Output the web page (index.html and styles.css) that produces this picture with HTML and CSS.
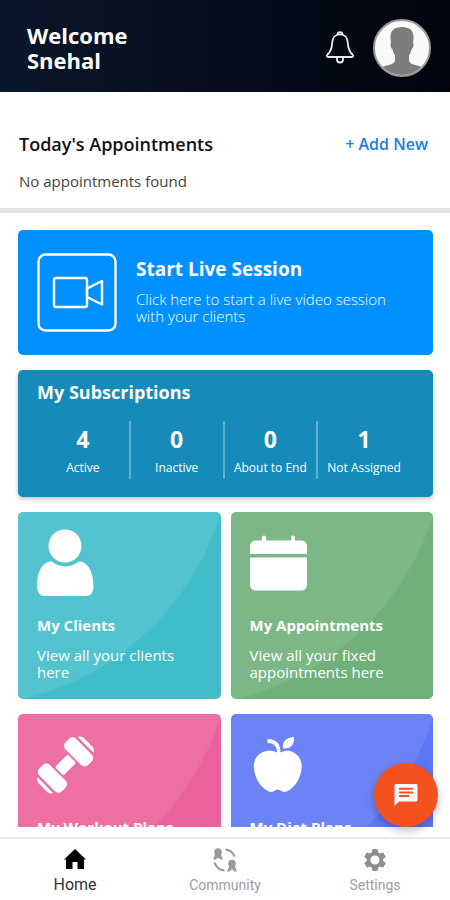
FILE: index.html
```html
<!DOCTYPE html>
<html lang="en">
<head>
  <meta charset="UTF-8">
  <title>Home</title>
  <meta name="viewport" content="width=device-width, initial-scale=1.0">
  <link rel="stylesheet" href="styles.css">
</head>
<body>
  <header class="topbar">
    <h1>Welcome<br>Snehal</h1>
    <button type="button" class="icon-btn" aria-label="Notifications">
      <svg width="28" height="34" viewBox="0 0 28 34" fill="none" stroke="#e8e8ea" stroke-width="1.8" stroke-linejoin="round">
        <path d="M11.500 3.600a2.500 2.500 0 0 1 5 0M14 3.400c-5 0-7.600 3.600-7.800 8.200-.2 6-1.200 9-5 12.400-.6.800-.2 2 .8 2h24c1 0 1.400-1.200.8-2-3.800-3.400-4.800-6.400-5-12.400C21.600 7 19 3.400 14 3.400z"/>
        <path d="M11 26.500v2a3 3 0 0 0 6 0v-2"/>
      </svg>
    </button>
    <button type="button" class="icon-btn" aria-label="Profile">
      <svg width="58" height="58" viewBox="0 0 58 58">
        <defs><clipPath id="face"><circle cx="29" cy="29" r="27"/></clipPath></defs>
        <circle cx="29" cy="29" r="28" fill="#fafafa" stroke="#9a9a9a" stroke-width="2"/>
        <path clip-path="url(#face)" fill="#7d7d7d" d="M29 8c-8 0-12 4-11.500 11 .2 2 .3 4 .5 5-1.200 1-.5 5 1.500 6.500.8 3 1.500 4.500 2.500 6v5.500c-1 3-6 4-10 5C9 48 6.500 49.500 5 51v7h48v-7c-1.500-1.500-4-3-7-4-4-1-9-2-10-5v-5.500c1-1.500 1.700-3 2.500-6 2-1.500 2.700-5.500 1.500-6.500.2-1 .3-3 .5-5C41 12 37 8 29 8z"/>
      </svg>
    </button>
  </header>

  <main class="content">
    <section class="today">
      <div class="today-head">
        <h2>Today's Appointments</h2>
        <a href="#">+ Add New</a>
      </div>
      <p>No appointments found</p>
    </section>

    <div class="cards">
      <a href="#" class="card live">
        <svg width="80" height="80" viewBox="0 0 80 80" fill="none" stroke="#fff" stroke-width="2.4" stroke-linejoin="round">
          <rect x="1.500" y="2.500" width="77" height="76" rx="7"/>
          <rect x="17" y="26" width="33" height="29" rx="2"/>
          <path d="M50 36.500l15-7.500v23.500l-15-7.500z"/>
        </svg>
        <div class="live-text">
          <h3>Start Live Session</h3>
          <p>Click here to start a live video session with your clients</p>
        </div>
      </a>

      <section class="card subs">
        <h3>My Subscriptions</h3>
        <ul class="stats">
          <li><strong>4</strong><span>Active</span></li>
          <li><strong>0</strong><span>Inactive</span></li>
          <li><strong>0</strong><span>About to End</span></li>
          <li><strong>1</strong><span>Not Assigned</span></li>
        </ul>
      </section>

      <div class="tiles">
        <a href="#" class="card tile clients">
          <svg width="58" height="72" viewBox="0 0 58 72" fill="#fff">
            <circle cx="28" cy="18" r="16.500"/>
            <path d="M15 33.500c7.500 6.500 19 6.500 26.500 0C50 33 56.500 43 56.500 58c0 7-3 10-8 10H8c-5 0-8-3-8-10 0-15 6-25 15-24.500z"/>
          </svg>
          <h4>My Clients</h4>
          <p>View all your clients here</p>
        </a>
        <a href="#" class="card tile appointments">
          <svg width="58" height="72" viewBox="0 0 58 72" fill="#fff">
            <path d="M6 12.500h6V9.500a2 2 0 0 1 4 0v3h25V9.500a2 2 0 0 1 4 0v3h6c4 0 6 2.500 6 6.500v7H0v-7c0-4 2-6.500 6-6.500zM0 29.500h57V56c0 4-2 6.500-6 6.500H6c-4 0-6-2.500-6-6.500z"/>
          </svg>
          <h4>My Appointments</h4>
          <p>View all your fixed appointments here</p>
        </a>
        <a href="#" class="card tile workout">
          <svg width="58" height="72" viewBox="0 0 58 72" fill="#fff">
            <g transform="translate(28.5 35) rotate(-45)">
              <rect x="-9" y="-6" width="18" height="12" rx="2"/>
              <rect x="-26" y="-16" width="15" height="32" rx="5"/>
              <rect x="11" y="-16" width="15" height="32" rx="5"/>
              <path d="M-28.500-11c-2.500 1-3.500 3-3.500 6v10c0 3 1 5 3.500 6zM28.500-11c2.500 1 3.500 3 3.500 6v10c0 3-1 5-3.500 6z"/>
            </g>
          </svg>
          <h4>My Workout Plans</h4>
          <p>View all your workout plans here</p>
        </a>
        <a href="#" class="card tile diet">
          <svg width="58" height="72" viewBox="0 0 58 72" fill="#fff">
            <path d="M27 22.500c-4.500-2.500-11-2.500-15 0C5.500 26 3 32 4 39c1 9 6 17 12 21 4 2.500 6.500 2.500 9 .5 2-1.500 3.500-1.500 5.500 0 2.500 2 5 2 9-.5 6-4 11-12 12-21 1-7-1.500-13-8-16.500-4-2.500-8.500-2.500-13 0 0-8-3.500-13.500-13-13.500v4c6 0 9.500 3 9.500 9z"/>
            <path d="M33 18.500c-1-7.500 3.500-11 11-11.500.5 7.500-3 12-11 11.500z"/>
          </svg>
          <h4>My Diet Plans</h4>
          <p>View all your diet plans here</p>
        </a>
      </div>
    </div>
  </main>

  <button type="button" class="chat" aria-label="Messages">
    <svg width="24" height="24" viewBox="0 0 24 24" fill="#fff">
      <path d="M22 1H2C1 1 .5 1.600.5 2.500V23L5 18.500h17c1 0 1.500-.6 1.500-1.500V2.500c0-.9-.5-1.500-1.500-1.500zM5 4.800h14v2H5zm0 3.600h14v2H5zm0 3.600h10v2H5z"/>
    </svg>
  </button>

  <nav class="tabs">
    <a href="#" class="active">
      <svg width="24" height="24" viewBox="0 0 24 24" fill="#000">
        <path d="M12 1l11 10.500h-2V21h-6.500v-7h-5v7H3v-9.500H1z"/>
      </svg>
      <span>Home</span>
    </a>
    <a href="#">
      <svg width="26" height="24" viewBox="0 0 26 24" fill="#999">
        <circle cx="6" cy="4" r="3.800"/>
        <path d="M3.500 6L1 11.500h2.500L6 9.500l2.500 2H11L8.500 6z"/>
        <circle cx="20" cy="15.500" r="3.800"/>
        <path d="M17.500 17.500L15 23.500h2.500l2.500-2.500 2.500 2.500H25l-2.500-6z"/>
        <path d="M13.500 1.500c4.500.5 7.500 3 9 7M2.500 14.500c1.500 4.500 5 7.500 10 8" fill="none" stroke="#999" stroke-width="2.2"/>
      </svg>
      <span>Community</span>
    </a>
    <a href="#">
      <svg width="24" height="24" viewBox="1 1 22 22" fill="#8e8e8e">
        <path d="M19.430 12.980c.04-.32.070-.64.070-.98s-.03-.66-.07-.98l2.110-1.650c.19-.15.240-.42.120-.64l-2-3.460c-.12-.22-.39-.3-.61-.22l-2.490 1c-.52-.4-1.080-.73-1.690-.98l-.38-2.650C14.460 2.180 14.250 2 14 2h-4c-.25 0-.46.180-.49.420l-.38 2.650c-.61.250-1.170.590-1.690.980l-2.490-1c-.23-.09-.49 0-.61.220l-2 3.460c-.13.220-.07.490.120.640l2.110 1.650c-.04.320-.07.650-.07.980s.03.660.070.980l-2.110 1.650c-.19.150-.24.420-.12.640l2 3.460c.12.220.390.300.610.220l2.490-1c.52.400 1.080.730 1.690.980l.38 2.650c.03.240.240.420.490.420h4c.25 0 .46-.18.490-.42l.38-2.650c.61-.25 1.170-.59 1.690-.98l2.490 1c.23.090.490 0 .610-.22l2-3.460c.12-.22.070-.49-.12-.64l-2.110-1.650zM12 16.200a4.200 4.200 0 1 1 0-8.400 4.200 4.200 0 0 1 0 8.400z"/>
      </svg>
      <span>Settings</span>
    </a>
  </nav>
</body>
</html>
```

FILE: styles.css
```css
* {
  box-sizing: border-box;
}
body {
  margin: 0;
  height: 100vh;
  display: flex;
  flex-direction: column;
  position: relative;
  font-family: "Open Sans", "Noto Sans", sans-serif;
  background: #fff;
  color: #111;
}
h1, h2, h3, h4, p, ul {
  margin: 0;
  padding: 0;
}
a {
  color: inherit;
  text-decoration: none;
}
button {
  border: none;
  padding: 0;
  background: none;
  cursor: pointer;
}
svg {
  display: block;
  flex: none;
}

/* Header */
.topbar {
  display: flex;
  align-items: center;
  gap: 19px;
  padding: 19px 19px 15px 27px;
  background: linear-gradient(to right, #0a172a, #060d1d 50%, #01040d);
  color: #fff;
}
.topbar h1 {
  flex: 1;
  font-size: 22px;
  line-height: 25px;
}

/* Scrolling content */
.content {
  flex: 1;
  min-height: 0;
  overflow: hidden auto;
  scrollbar-width: none;
  margin-bottom: 10px;
}
.today {
  padding: 40px 22px 17px 19px;
  border-bottom: 5px solid #e5e5e5;
}
.today-head {
  display: flex;
  align-items: center;
  justify-content: space-between;
}
.today h2 {
  font-size: 18px;
  line-height: 24px;
  font-weight: 600;
}
.today a {
  font-size: 16px;
  line-height: 24px;
  font-weight: 600;
  color: #1a7ee6;
}
.today p {
  margin-top: 15px;
  font-size: 15px;
  line-height: 20px;
  color: #444;
}

.cards {
  display: flex;
  flex-direction: column;
  gap: 15px;
  padding: 17px 17px 17px 18px;
}
.card {
  border-radius: 5px;
  color: #fff;
}
.card h3 {
  font-size: 18px;
  line-height: 24px;
}
.live {
  display: flex;
  align-items: center;
  gap: 19px;
  padding: 22px 19px 23px;
  background: #0090ff;
}
.card.live h3 {
  font-size: 19px;
}
.live p {
  margin-top: 10px;
  padding-bottom: 3px;
  font-size: 15px;
  line-height: 17px;
  font-weight: 300;
}
.subs {
  padding: 10px 19px 18px;
  background: #168ab8;
  box-shadow: 0 2px 4px rgba(0,0,0,0.25);
}
.stats {
  display: flex;
  margin: 17px 4px 0 0;
  list-style: none;
}
.stats li {
  flex: 1;
  display: flex;
  flex-direction: column;
  align-items: center;
  height: 58px;
}
.stats li + li {
  border-left: 2px solid #5fb1d2;
}
.stats strong {
  font-size: 23px;
  line-height: 36px;
}
.stats span {
  font-size: 12px;
  line-height: 22px;
  white-space: nowrap;
}

/* Menu tiles */
.tiles {
  display: grid;
  grid-template-columns: 1fr 1fr;
  gap: 15px 10px;
}
.tile {
  padding: 16px 19px 18px;
  background-image: radial-gradient(circle at -60px -80px, rgba(255,255,255,0.09) 274px, transparent 276px);
}
.tile h4 {
  margin-top: 15px;
  font-size: 15px;
  line-height: 20px;
}
.tile p {
  margin-top: 12px;
  font-size: 15px;
  line-height: 17px;
}
.clients { background-color: #41bdca; }
.appointments { background-color: #70b07b; }
.workout { background-color: #eb619b; }
.diet { background-color: #5d77f5; }

/* Floating chat button */
.chat {
  position: absolute;
  right: 12px;
  bottom: 73px;
  width: 64px;
  height: 64px;
  display: flex;
  align-items: center;
  justify-content: center;
  border-radius: 50%;
  background: #f4511e;
  box-shadow: 0 4px 8px rgba(0,0,0,0.25);
}

/* Bottom tabs */
.tabs {
  display: flex;
  padding-bottom: 5px;
  border-top: 2px solid #e9e9e9;
  font-family: Roboto, sans-serif;
}
.tabs a {
  flex: 1;
  display: flex;
  flex-direction: column;
  align-items: center;
  padding-top: 9px;
  color: #a0a0a0;
}
.tabs span {
  margin-top: 3px;
  font-size: 14px;
  line-height: 20px;
}
.tabs .active span {
  font-size: 16px;
  color: #333;
}
```
